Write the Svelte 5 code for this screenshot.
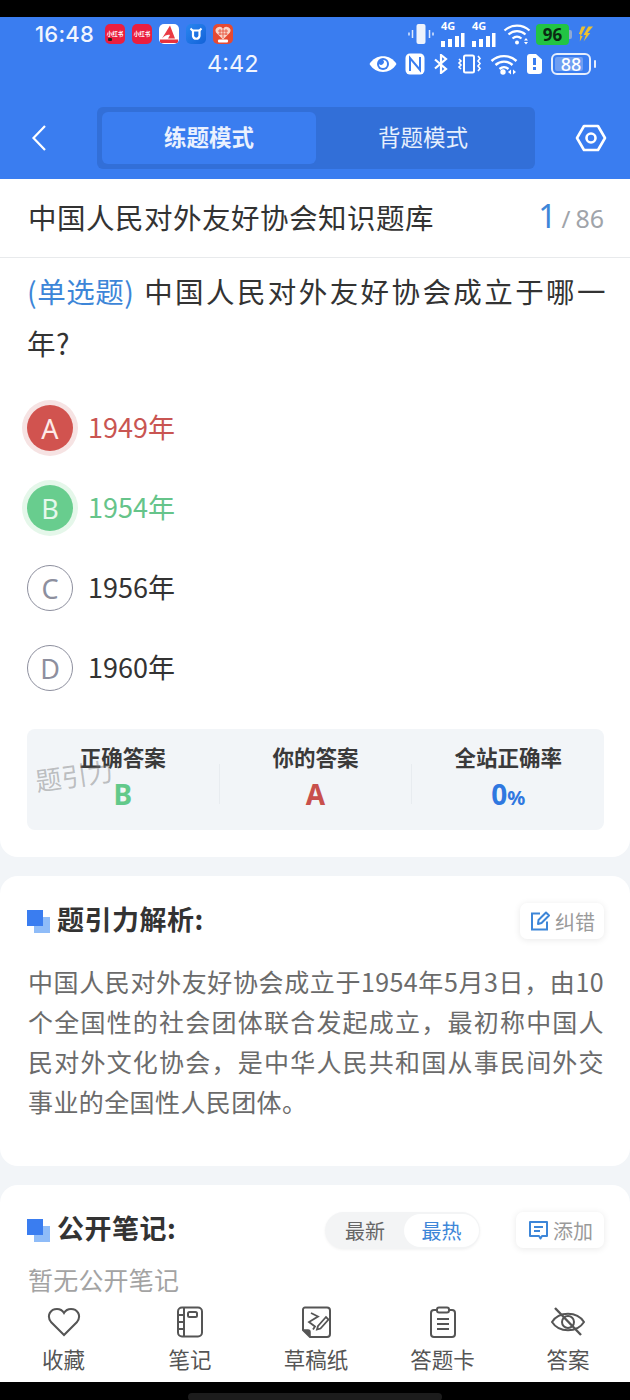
<script>
  const options = [
    { k: 'A', t: '1949年', cls: 'wrong' },
    { k: 'B', t: '1954年', cls: 'right' },
    { k: 'C', t: '1956年', cls: '' },
    { k: 'D', t: '1960年', cls: '' }
  ];
</script>

<div class="screen">
  <div class="topblack"></div>
  <header class="head">
    <div class="status1">
      <span class="time">16:48</span>
      <div class="apps">
        <span class="app red"><i>小红书</i><s></s></span>
        <span class="app red"><i>小红书</i></span>
        <span class="app white">
          <svg viewBox="0 0 20 20" width="20" height="20"><path d="M11 1.500 3 14.500c3-3.500 6-4 8-3.500l-2 3.500h7z" fill="#ea3a44"/><rect x="1" y="15.500" width="18" height="3.500" fill="#e8323c"/></svg>
        </span>
        <span class="app blue">
          <svg viewBox="0 0 20 20" width="20" height="20"><path d="M4.500 4.500 7 7M15.500 4.500 13 7" stroke="#fff" stroke-width="2"/><path d="M7 6.500h6.500V12a3.300 3.300 0 0 1-6.500 0z" fill="none" stroke="#fff" stroke-width="2.200"/></svg>
        </span>
        <span class="app heart">
          <svg viewBox="0 0 20 20" width="20" height="20"><path d="M10 15.500 3 8.500a3.700 3.700 0 0 1 7-3.500 3.700 3.700 0 0 1 7 3.500z" fill="#f9d4c8"/><path d="M5 7h10M5.500 10h9M10 5v9M7 5v6M13 5v6" stroke="#e64a32" stroke-width=".8"/><rect x="5" y="15.500" width="10" height="3" rx="1" fill="#fff"/></svg>
        </span>
      </div>
      <div class="sys1">
        <svg viewBox="0 0 26 24" width="26" height="24"><rect x="8.500" y="2" width="9" height="20" rx="2" fill="#eef3fc"/><path d="M4.500 8v8M1 10.500v3M21.500 8v8M25 10.500v3" stroke="#dfe9fb" stroke-width="1.500"/></svg>
        <span class="sig"><b>4G</b><svg viewBox="0 0 24 14" width="24" height="14"><rect x="0" y="8" width="4" height="6" fill="#fff"/><rect x="7" y="6" width="4" height="8" fill="#fff"/><rect x="14" y="3" width="4" height="11" fill="#fff"/><rect x="20" y="0" width="3.500" height="14" fill="#fff"/></svg></span>
        <span class="sig"><b>4G</b><svg viewBox="0 0 24 14" width="24" height="14"><rect x="0" y="8" width="4" height="6" fill="#fff"/><rect x="7" y="6" width="4" height="8" fill="#fff"/><rect x="14" y="3" width="4" height="11" fill="#fff"/><rect x="20" y="0" width="3.500" height="14" fill="#fff"/></svg></span>
        <svg viewBox="0 0 28 22" width="28" height="22"><path d="M1.500 7.500c7-6.500 18-6.500 25 0M5.500 11.500c5-4.500 12-4.500 17 0M9.500 15.500c3-2.500 6-2.500 9 0" fill="none" stroke="#fff" stroke-width="2.200"/><circle cx="14" cy="19.500" r="2" fill="#fff"/><path d="M23 15l-2 2.500h4zM23 21.500l-2-2.500h4z" fill="#fff"/></svg>
        <span class="batt96">96</span>
        <svg class="bolt" viewBox="0 0 18 18" width="17" height="18"><path d="M5 1h4L4 11h2l-3 6 .5-8H2zM12 1h5l-6 7h3L7 17l2.500-7H7z" fill="#eec12f"/></svg>
      </div>
    </div>
    <div class="status2">
      <span class="time2">4:42</span>
      <div class="sys2">
        <svg viewBox="0 0 28 18" width="28" height="18"><path d="M0.500 9c6-10.500 21-10.500 27 0-6 10.500-21 10.500-27 0z" fill="#fff"/><circle cx="14" cy="9" r="6" fill="#3a7df0"/><path d="M10 9a4 4 0 1 0 4-4 2.500 2.500 0 0 1-4 4z" fill="#fff"/></svg>
        <svg viewBox="0 0 20 22" width="20" height="22"><rect x="0.500" y="0.500" width="19" height="21" rx="4.500" fill="#fff"/><path d="M5 18V5l10 12V4" fill="none" stroke="#3a7df0" stroke-width="2"/></svg>
        <svg viewBox="0 0 15 20" width="15" height="20"><path d="M2 5.500l11 9.500-5 4V1l5 4L2 14.500" fill="none" stroke="#fff" stroke-width="2.200"/></svg>
        <svg viewBox="0 0 26 20" width="26" height="20"><rect x="8" y="1.500" width="10" height="17" rx="1.500" fill="none" stroke="#fff" stroke-width="2"/><path d="M3 5l2 2-2 2 2 2-2 2 2 2M22 2l2 2.500-2 2.500 2 2.500-2 2.500 2 2.500-2 2.500" fill="none" stroke="#fff" stroke-width="1.600"/></svg>
        <svg viewBox="0 0 28 22" width="28" height="22"><path d="M1.500 8c7-6.500 18-6.500 25 0M5.500 12c5-4.500 12-4.500 17 0M9.500 16c3-2.500 6-2.500 9 0" fill="none" stroke="#fff" stroke-width="2.400"/><circle cx="13" cy="19" r="2.700" fill="#fff"/><path d="M21 16.500l-3 2.500 3 2.500zM23 16.500l3 2.500-3 2.500z" fill="#fff"/></svg>
        <svg viewBox="0 0 17 22" width="17" height="22"><path d="M1 4a3 3 0 0 1 3-3h6l6 5.500V18a3 3 0 0 1-3 3H4a3 3 0 0 1-3-3z" fill="#fff"/><rect x="7" y="5" width="3" height="7" fill="#3a7df0"/><rect x="7" y="14" width="3" height="3" fill="#3a7df0"/></svg>
        <span class="batt88"><em></em><u>88</u></span><span class="nub"></span>
      </div>
    </div>
    <nav class="navrow">
      <svg class="back" viewBox="0 0 16 28" width="16" height="28"><path d="M14 2 2.500 14 14 26" fill="none" stroke="#fff" stroke-width="2.200"/></svg>
      <div class="tabs">
        <span class="tab active">练题模式</span>
        <span class="tab">背题模式</span>
      </div>
      <svg class="gear" viewBox="0 0 32 28" width="32" height="28"><path d="M9 2h14l7 12-7 12H9L2 14z" fill="none" stroke="#fff" stroke-width="2.600" stroke-linejoin="round"/><circle cx="16" cy="14" r="4.500" fill="none" stroke="#fff" stroke-width="2.600"/></svg>
    </nav>
  </header>

  <div class="titlebar">
    <h1>中国人民对外友好协会知识题库</h1>
    <div class="count"><strong>1</strong><span class="slash">/</span><span>86</span></div>
  </div>

  <main class="body">
    <section class="card qcard">
      <p class="q"><span class="tag">(单选题)</span>中国人民对外友好协会成立于哪一年?</p>
      <ul class="opts">
        {#each options as o}
          <li class="opt {o.cls}"><span class="ball">{o.k}</span><span class="otext">{o.t}</span></li>
        {/each}
      </ul>
      <div class="stats">
        <div class="stat"><b>正确答案</b><span class="val g">B</span></div>
        <i class="sep"></i>
        <div class="stat"><b>你的答案</b><span class="val r">A</span></div>
        <i class="sep"></i>
        <div class="stat"><b>全站正确率</b><span class="val bl">0<small>%</small></span></div>
        <span class="mark">题引力</span>
      </div>
    </section>

    <section class="card acard">
      <div class="sechead">
        <span class="squares"></span>
        <h2>题引力解析<span class="colon">:</span></h2>
        <button class="chip">
          <svg viewBox="0 0 22 22" width="22" height="22"><path d="M11 3.500H3v16h15v-8" fill="none" stroke="#3d86d8" stroke-width="2"/><path d="M9 14l.500-4L17 2.500 20 5.500 12.500 13z" fill="none" stroke="#3d86d8" stroke-width="2" stroke-linejoin="round"/></svg>
          纠错
        </button>
      </div>
      <p class="analysis">中国人民对外友好协会成立于1954年5月3日，由10个全国性的社会团体联合发起成立，最初称中国人民对外文化协会，是中华人民共和国从事民间外交事业的全国性人民团体。</p>
    </section>

    <section class="card ncard">
      <div class="sechead">
        <span class="squares"></span>
        <h2>公开笔记<span class="colon">:</span></h2>
        <div class="seg"><span>最新</span><span class="on">最热</span></div>
        <button class="chip wide">
          <svg viewBox="0 0 22 22" width="22" height="22"><path d="M3 3h17v14h-5l-1.500 2.500L12 17H3z" fill="none" stroke="#3d86d8" stroke-width="2" stroke-linejoin="round"/><path d="M7 8h9M7 12h6" stroke="#3d86d8" stroke-width="2"/></svg>
          添加
        </button>
      </div>
      <p class="none">暂无公开笔记</p>
    </section>
  </main>

  <footer class="bar">
    <div class="item">
      <svg viewBox="0 0 34 30" width="34" height="30"><path d="M17 28 4 15C-1 8 4 2 10 2c3 0 5.500 1.500 7 4 1.500-2.500 4-4 7-4 6 0 11 6 6 13z" fill="none" stroke="#555" stroke-width="2"/></svg>
      <span>收藏</span>
    </div>
    <div class="item">
      <svg viewBox="0 0 28 32" width="28" height="32"><rect x="2" y="1.500" width="24" height="29" rx="4" fill="none" stroke="#555" stroke-width="2"/><path d="M8 2v28M2 9h6M2 16h6M2 23h6" stroke="#555" stroke-width="2"/><rect x="12" y="6" width="9" height="5" rx="1.500" fill="none" stroke="#555" stroke-width="2"/></svg>
      <span>笔记</span>
    </div>
    <div class="item">
      <svg viewBox="0 0 30 32" width="30" height="32"><path d="M4 1.500h22a3 3 0 0 1 3 3V28a3 3 0 0 1-3 3H9l-7-7V3.500a2 2 0 0 1 2-2z" fill="none" stroke="#555" stroke-width="2"/><path d="M2 24h5a2 2 0 0 1 2 2v5" fill="#555" stroke="#555" stroke-width="1.500"/><path d="M10 7l7 3.500-9 5.500 6 4.500-2 3" fill="none" stroke="#555" stroke-width="1.800"/><path d="M17 20l8-9 2.500 2.500-8 9-3.500 1z" fill="none" stroke="#555" stroke-width="1.800"/></svg>
      <span>草稿纸</span>
    </div>
    <div class="item">
      <svg viewBox="0 0 28 32" width="28" height="32"><path d="M8 4H5a3 3 0 0 0-3 3v21a3 3 0 0 0 3 3h18a3 3 0 0 0 3-3V7a3 3 0 0 0-3-3h-3" fill="none" stroke="#555" stroke-width="2"/><rect x="8" y="1.500" width="12" height="5" rx="2" fill="none" stroke="#555" stroke-width="2"/><path d="M8 13h12M8 18h12M8 23h12" stroke="#555" stroke-width="2"/></svg>
      <span>答题卡</span>
    </div>
    <div class="item">
      <svg viewBox="0 0 36 32" width="36" height="32"><path d="M2 16c7-11 25-11 32 0-7 11-25 11-32 0z" fill="none" stroke="#555" stroke-width="2"/><circle cx="18" cy="16" r="6" fill="none" stroke="#555" stroke-width="2"/><path d="M5 2l26 27" stroke="#555" stroke-width="2.400"/></svg>
      <span>答案</span>
    </div>
  </footer>
  <div class="botblack"><span class="pill"></span></div>
</div>

<style>
  :global(body) { margin: 0; background: #000; }
  .screen {
    width: 630px; height: 1400px; overflow: hidden; position: relative;
    display: flex; flex-direction: column; background: #f2f5f8;
    font-family: "Noto Sans CJK SC", "Noto Sans", sans-serif; color: #333;
  }
  .topblack { height: 17px; background: #000; flex: none; }
  .head { height: 162px; background: #3a7df0; flex: none; color: #fff; display: flex; flex-direction: column; }
  .status1 { height: 34px; display: flex; align-items: center; padding: 0 0 0 35px; }
  .time { font: 500 22px/34px "Inter", sans-serif; color: #f1f5fe; letter-spacing: .2px; width: 70px; }
  .apps { display: flex; gap: 7px; }
  .app { width: 20px; height: 20px; border-radius: 5px; display: flex; align-items: center; justify-content: center; overflow: hidden; position: relative; }
  .app i { font-size: 5.500px; font-style: normal; color: #fff; white-space: nowrap; font-weight: 700; }
  .app s { position: absolute; left: 3px; bottom: 3px; width: 4px; height: 3px; border-radius: 1px; background: #222; }
  .red { background: #ea1f3f; }
  .white { background: #fff; }
  .blue { background: linear-gradient(135deg, #2a86f0, #1262d8); }
  .heart { background: #e64a32; }
  .sys1 { display: flex; align-items: center; margin-left: auto; margin-right: 36px; gap: 7px; }
  .sig { position: relative; width: 24px; height: 24px; display: flex; align-items: flex-end; margin-top: 2px; }
  .sig svg { display: block; }
  .sig b { position: absolute; left: 0; top: -3px; font: 700 11px/12px "Noto Sans", sans-serif; }
  .batt96 { position: relative; width: 33px; height: 21px; border-radius: 4px; background: #22c444; color: #0b2a12; font: 700 17px/21px "Noto Sans", sans-serif; text-align: center; margin-left: -2px; }
  .batt96::after { content: ""; position: absolute; right: -3px; top: 6px; width: 3px; height: 9px; background: #8fa9d6; border-radius: 0 2px 2px 0; }
  .bolt { margin-left: 1px; }
  .status2 { height: 26px; display: flex; align-items: center; padding-left: 207px; }
  .time2 { font: 400 23.500px/26px "Inter", sans-serif; color: #f1f5fe; }
  .sys2 { display: flex; align-items: center; margin-left: auto; margin-right: 34px; gap: 8px; }
  .batt88 { position: relative; width: 40px; height: 22px; border: 2px solid #e6eefd; border-radius: 6px; box-sizing: border-box; display: block; overflow: hidden; }
  .batt88 em { position: absolute; left: 2px; top: 2px; bottom: 2px; width: 28px; border-radius: 2px; background: #6f9ef2; }
  .batt88 u { position: absolute; inset: 0; text-align: center; font: 500 18px/18px "Noto Sans", sans-serif; text-decoration: none; color: #fff; }
  .nub { width: 2px; height: 8px; background: #e6eefd; border-radius: 1px; margin-left: -5px; }
  .navrow { height: 60px; margin-top: 31px; display: flex; align-items: center; position: relative; }
  .back { margin-left: 31px; }
  .tabs {
    margin-left: 50px; width: 438px; height: 62px; box-sizing: border-box; padding: 5px; border-radius: 6px;
    background: #326fd8; display: grid; grid-template-columns: 214px 1fr; align-items: stretch;
  }
  .tab { display: flex; align-items: center; justify-content: center; font-size: 22.500px; padding-bottom: 4px; color: #e6effd; }
  .tab.active { background: #3a7df0; border-radius: 6px; font-weight: 700; color: #eaf1fe; }
  .gear { margin-left: 40px; }

  .titlebar {
    height: 78px; flex: none; background: #fff; display: flex; align-items: center; justify-content: space-between;
    padding: 0 26px 0 28px; border-bottom: 1px solid #e8eaec;
  }
  h1 { margin: 0 0 4px; font-size: 28.500px; font-weight: 400; color: #333; letter-spacing: .5px; }
  .count { display: flex; align-items: baseline; color: #a0a4aa; font-size: 25px; gap: 5px; margin-bottom: 6px; font-family: "Noto Sans", sans-serif; }
  .count strong { color: #3d86d8; font-weight: 400; font-size: 32px; }
  .count .slash { font-size: 24px; }

  .body { flex: 1; min-height: 0; overflow: hidden; display: flex; flex-direction: column; gap: 19px; }
  .card { background: #fff; border-radius: 18px; flex: none; }
  .qcard { height: 599px; box-sizing: border-box; padding: 0 24px 0 27px; border-radius: 0 0 18px 18px; position: relative; }
  .q { margin: 0; padding-top: 7px; font-size: 28.500px; line-height: 52px; color: #333; letter-spacing: .5px; text-align: justify; }
  .tag { color: #3d86d8; display: inline-block; margin-right: 8px; }
  .opts { list-style: none; margin: 36px 0 0; padding: 0; display: flex; flex-direction: column; gap: 34px; }
  .opt { display: flex; align-items: center; height: 46px; gap: 15px; font-size: 27px; color: #333; }
  .otext { margin-top: -3px; }
  .ball {
    width: 46px; height: 46px; border-radius: 50%; box-sizing: border-box; flex: none; border: 1.500px solid #8d8f9e;
    display: flex; align-items: center; justify-content: center; font-size: 27px; color: #8d8f9e;
    font-family: "Noto Sans", sans-serif; font-weight: 400;
  }
  .wrong .ball { background: #d1534f; border: 0; color: #fde9e8; box-shadow: 0 0 0 5px #f6e3e3; }
  .right .ball { background: #68cd8e; border: 0; color: #e6f8ec; box-shadow: 0 0 0 5px #e5f7ea; }
  .wrong { color: #c95552; }
  .right { color: #66c48a; }
  .stats {
    position: absolute; left: 27px; right: 26px; top: 471px; height: 101px; background: #f2f5f8; border-radius: 8px;
    display: flex; align-items: flex-start;
  }
  .stat { flex: 1; display: flex; flex-direction: column; align-items: center; padding-top: 12px; }
  .stat b { font-size: 21.500px; line-height: 32px; font-weight: 700; color: #3a3a3a; }
  .val { font: 700 28px/36px "Noto Sans", sans-serif; margin-top: 3px; }
  .val small { font-size: 20px; }
  .g { color: #62c98a; }
  .r { color: #c8504c; }
  .bl { color: #2f78e0; }
  .sep { width: 1px; height: 40px; margin-top: 35px; background: #e8ecf0; flex: none; }
  .mark { position: absolute; left: 8px; top: 31px; font-size: 26px; line-height: 30px; color: rgba(120,120,120,.45); transform: rotate(-8deg); pointer-events: none; }

  .sechead { display: flex; align-items: center; height: 38px; }
  .squares { width: 23px; height: 23px; position: relative; flex: none; }
  .squares::before { content: ""; position: absolute; left: 7px; top: 7px; width: 16px; height: 16px; background: #8fbcf8; }
  .squares::after { content: ""; position: absolute; left: 0; top: 0; width: 16px; height: 16px; background: #3a7df0; }
  h2 { margin: 0 0 5px 7px; font-size: 27px; font-weight: 700; color: #333; letter-spacing: .5px; }
  .colon { margin-left: 0; }
  .chip {
    margin-left: auto; height: 36px; width: 84px; border: 0; border-radius: 7px; background: #fff; padding: 0;
    box-shadow: 0 1px 7px rgba(0,0,0,.09); display: flex; align-items: center; justify-content: center; gap: 4px;
    font: 400 20px "Noto Sans CJK SC", sans-serif; color: #9a9a9a;
  }
  .acard { height: 290px; box-sizing: border-box; padding: 26px 26px 0 27px; }
  .analysis { margin: 21px 0 0 1px; font-size: 25px; line-height: 40px; color: #6b6b6b; letter-spacing: .4px; text-align: justify; }
  .ncard { box-sizing: border-box; height: 200px; padding: 26px 26px 0 27px; }
  .seg { margin-left: auto; width: 155px; height: 37px; border-radius: 19px; background: #f3f4f5; display: grid; grid-template-columns: 78px 75px; align-items: center; text-align: center; font-size: 20px; color: #666; box-shadow: 0 1px 3px rgba(0,0,0,.05); padding: 0 1px; box-sizing: border-box; }
  .seg .on { background: #fff; color: #3d86d8; border-radius: 17px; line-height: 33px; }
  .seg + .chip { margin-left: 36px; }
  .chip.wide { width: 88px; }
  .none { margin: 12px 0 0 1px; font-size: 25px; line-height: 36px; color: #a3a3a3; letter-spacing: .2px; }

  .bar {
    position: absolute; left: 0; right: 0; top: 1297px; height: 85px; background: #fff;
    display: grid; grid-template-columns: 127px 126px 126px 127px 1fr;
  }
  .item { display: flex; flex-direction: column; align-items: center; padding-top: 9px; }
  .item svg { height: 32px; flex: none; }
  .item span { font-size: 21.500px; line-height: 30px; color: #555; margin-top: 6px; }
  .botblack { position: absolute; left: 0; right: 0; top: 1382px; height: 18px; background: #000; }
  .pill { position: absolute; left: 188px; top: 11px; width: 254px; height: 8px; border-radius: 4px; background: #1c1c1c; }
</style>
